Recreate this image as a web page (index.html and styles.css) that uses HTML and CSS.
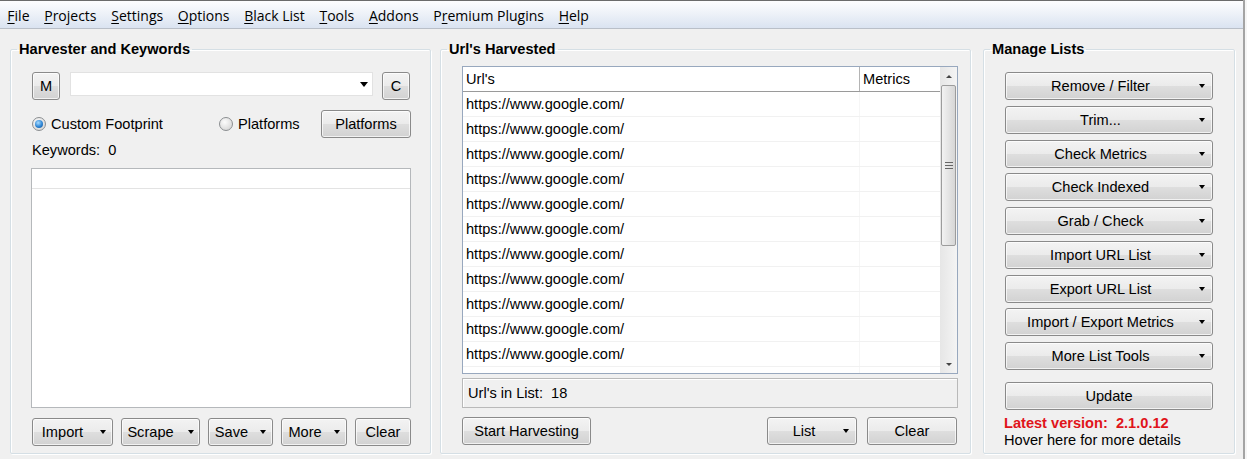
FILE: index.html
```html
<!DOCTYPE html>
<html lang="en">
<head>
    <meta charset="UTF-8">
    <title>Scrapebox</title>
    <link rel="stylesheet" href="styles.css">
</head>
<body>
    <div class="window">
        <ul class="menubar">
            <li><u>F</u>ile</li>
            <li><u>P</u>rojects</li>
            <li><u>S</u>ettings</li>
            <li><u>O</u>ptions</li>
            <li><u>B</u>lack List</li>
            <li><u>T</u>ools</li>
            <li><u>A</u>ddons</li>
            <li>P<u>r</u>emium Plugins</li>
            <li><u>H</u>elp</li>
        </ul>

        <div class="panes">
            <!-- left: footprint + keywords -->
            <fieldset class="pane pane-harvester">
                <legend>Harvester and Keywords</legend>
                <div class="pane-body">
                    <div class="footprint-row">
                        <button class="btn btn-square">M</button>
                        <div class="combo"><span class="caret"></span></div>
                        <button class="btn btn-square">C</button>
                    </div>
                    <div class="mode-row">
                        <label class="radio radio-first"><span class="radio-dot checked"></span>Custom Footprint</label>
                        <label class="radio"><span class="radio-dot"></span>Platforms</label>
                        <button class="btn btn-platforms">Platforms</button>
                    </div>
                    <div class="keyword-count">Keywords:&nbsp; 0</div>
                    <div class="keyword-box">
                        <div class="keyword-head"></div>
                    </div>
                    <div class="button-row">
                        <button class="btn btn-menu w-import">Import <span class="caret"></span></button>
                        <button class="btn btn-menu w-scrape">Scrape <span class="caret"></span></button>
                        <button class="btn btn-menu w-save">Save <span class="caret"></span></button>
                        <button class="btn btn-menu w-more">More <span class="caret"></span></button>
                        <button class="btn w-clear">Clear</button>
                    </div>
                </div>
            </fieldset>

            <!-- middle: harvested urls -->
            <fieldset class="pane pane-urls">
                <legend>Url's Harvested</legend>
                <div class="pane-body">
                    <div class="url-table">
                        <div class="url-list">
                            <div class="url-head">
                                <div class="col-url">Url's</div>
                                <div class="col-metrics">Metrics</div>
                            </div>
                            <div class="url-rows" id="rows"></div>
                        </div>
                        <div class="scrollbar">
                            <div class="sb-arrow"><span class="tri-up"></span></div>
                            <div class="sb-thumb"><span class="grip"></span></div>
                            <div class="sb-track"></div>
                            <div class="sb-arrow"><span class="tri-down"></span></div>
                        </div>
                    </div>
                    <div class="url-status">Url's in List:&nbsp;&nbsp;18</div>
                    <div class="harvest-row">
                        <button class="btn w-start">Start Harvesting</button>
                        <button class="btn btn-menu w-list">List <span class="caret"></span></button>
                        <button class="btn w-clear-list">Clear</button>
                    </div>
                </div>
            </fieldset>

            <!-- right: list tools -->
            <fieldset class="pane pane-manage">
                <legend>Manage Lists</legend>
                <div class="pane-body">
                    <div class="tool-list">
                        <button class="btn btn-tool"><span class="label">Remove / Filter</span><span class="caret"></span></button>
                        <button class="btn btn-tool"><span class="label">Trim...</span><span class="caret"></span></button>
                        <button class="btn btn-tool"><span class="label">Check Metrics</span><span class="caret"></span></button>
                        <button class="btn btn-tool"><span class="label">Check Indexed</span><span class="caret"></span></button>
                        <button class="btn btn-tool"><span class="label">Grab / Check</span><span class="caret"></span></button>
                        <button class="btn btn-tool"><span class="label">Import URL List</span><span class="caret"></span></button>
                        <button class="btn btn-tool"><span class="label">Export URL List</span><span class="caret"></span></button>
                        <button class="btn btn-tool"><span class="label">Import / Export Metrics</span><span class="caret"></span></button>
                        <button class="btn btn-tool"><span class="label">More List Tools</span><span class="caret"></span></button>
                    </div>
                    <button class="btn btn-update">Update</button>
                    <div class="version">Latest version:&nbsp; 2.1.0.12</div>
                    <div class="version-hint">Hover here for more details</div>
                </div>
            </fieldset>
        </div>
    </div>

    <script>
        const rows = document.getElementById('rows');
        for (let i = 0; i < 12; i++) {
            const row = document.createElement('div');
            row.className = 'url-row';
            row.innerHTML = '<div class="col-url">https://www.google.com/</div><div class="col-metrics"></div>';
            rows.appendChild(row);
        }
    </script>
</body>
</html>
```

FILE: styles.css
```css
* {
    box-sizing: border-box;
}

body {
    margin: 0;
    background: #f6f6f6;
    font-family: "Liberation Sans", Arial, sans-serif;
    font-size: 14.6px;
    color: #000;
    overflow: hidden;
}

.window {
    width: 1245px;
    height: 459px;
    background: #f0f0f0;
    border-right: 2px solid #a4a4a4;
}

/* menu bar */
.menubar {
    display: flex;
    margin: 0;
    padding: 0;
    list-style: none;
    height: 29px;
    border-top: 1px solid #6b6b6b;
    border-bottom: 1px solid #b9bfc8;
    background: linear-gradient(#fdfdfe, #eef2f8 45%, #dae3f1);
    font-family: "Open Sans", "Noto Sans", sans-serif;
    font-size: 14px;
    line-height: 29px;
}

.menubar li {
    padding: 0 7.35px;
}

.menubar u {
    text-decoration-thickness: 1px;
    text-underline-offset: 2px;
}

/* panes */
.panes {
    display: flex;
    padding: 11px 0 0 10px;
}

.pane {
    margin: 0;
    padding: 0;
    height: 414px;
    border: 1px solid #d5dfe5;
    box-shadow: inset 1px 1px 0 #fff, 1px 1px 0 #fff;
    border-radius: 2px;
}

.pane legend {
    margin-left: 6px;
    padding: 0 2px;
    font-weight: bold;
    line-height: 18px;
}

.pane-harvester {
    width: 421px;
}

.pane-urls {
    width: 531px;
    margin-left: 9px;
}

.pane-manage {
    width: 252px;
    margin-left: 12px;
}

.pane-body {
    padding: 14px 19px 0 21px;
}

.pane-urls .pane-body {
    padding: 8px 11px 0 21px;
}

/* buttons */
.btn {
    height: 28px;
    padding: 0;
    font: inherit;
    color: #000;
    border: 1px solid #8a8a8a;
    border-radius: 3px;
    background: linear-gradient(#f3f3f3, #ebebeb 50%, #dedede 51%, #d2d2d2);
    box-shadow: inset 0 0 0 1px rgba(255, 255, 255, 0.7);
}

.caret {
    display: inline-block;
    width: 0;
    height: 0;
    border-left: 3.5px solid transparent;
    border-right: 3.5px solid transparent;
    border-top: 4px solid #000;
    vertical-align: middle;
}

.btn-menu {
    display: flex;
    align-items: center;
    justify-content: center;
    gap: 14px;
}

.btn-square {
    width: 28px;
}

/* left pane */
.footprint-row {
    display: flex;
    align-items: flex-start;
}

.combo {
    position: relative;
    width: 303px;
    height: 24px;
    margin: 0 9px 0 10px;
    background: #fff;
    border: 1px solid #e2e2e2;
}

.combo .caret {
    position: absolute;
    right: 4px;
    top: 9px;
    border-left-width: 4px;
    border-right-width: 4px;
    border-top-width: 5px;
}

.mode-row {
    display: flex;
    align-items: center;
    margin-top: 10px;
}

.radio {
    display: flex;
    align-items: center;
}

.radio-first {
    width: 187px;
}

.radio-dot {
    width: 14px;
    height: 14px;
    margin-right: 5px;
    border-radius: 50%;
    border: 1px solid #8b8e91;
    background: radial-gradient(circle at 40% 35%, #fcfcfc, #dcdcdc 70%, #cfcfcf);
    position: relative;
}

.radio-dot.checked::after {
    content: "";
    position: absolute;
    left: 2px;
    top: 2px;
    width: 8px;
    height: 8px;
    border-radius: 50%;
    background: radial-gradient(circle at 40% 35%, #a9dcff, #2e86d6 55%, #144b85);
}

.btn-platforms {
    width: 90px;
    margin-left: auto;
}

.keyword-count {
    margin-top: 3px;
    line-height: 18px;
}

.keyword-box {
    margin-top: 9px;
    margin-left: -1px;
    width: 380px;
    height: 240px;
    background: #fff;
    border: 1px solid #b5b8bb;
}

.keyword-head {
    height: 20px;
    border-bottom: 1px solid #e3e3e3;
}

.button-row {
    display: flex;
    gap: 8px;
    margin-top: 10px;
}

.w-import { width: 81px; gap: 17px; padding-left: 3px; }
.w-scrape { width: 79px; }
.w-save { width: 65px; gap: 12px; }
.w-more { width: 66px; gap: 12px; }
.w-clear { width: 56px; }

/* middle pane */
.url-table {
    display: flex;
    width: 496px;
    height: 308px;
    border: 1px solid #98a8be;
    background: #fff;
}

.url-list {
    flex: 1;
    overflow: hidden;
}

.url-head {
    display: flex;
    height: 25px;
    border-bottom: 1px solid #9a9a9a;
    line-height: 25px;
}

.url-head .col-url {
    border-right: 1px solid #b4b4b4;
}

.col-url {
    width: 397px;
    padding-left: 3px;
}

.col-metrics {
    flex: 1;
    padding-left: 3px;
}

.url-row {
    display: flex;
    height: 25px;
    line-height: 25px;
    border-bottom: 1px solid #f1f1f1;
}

.url-row .col-url {
    border-right: 1px solid #f6f6f6;
}

.scrollbar {
    width: 17px;
    display: flex;
    flex-direction: column;
    background: linear-gradient(to right, #e6e6e6, #f4f4f4);
}

.sb-arrow {
    height: 18px;
    display: flex;
    align-items: center;
    justify-content: center;
}

.tri-up, .tri-down {
    width: 0;
    height: 0;
    border-left: 3px solid transparent;
    border-right: 3px solid transparent;
}

.tri-up {
    border-bottom: 3px solid #444;
}

.tri-down {
    border-top: 3px solid #444;
}

.sb-thumb {
    height: 161px;
    margin: 0 1px;
    border: 1px solid #9c9c9c;
    border-radius: 2px;
    background: linear-gradient(to right, #f2f2f2, #e4e4e4 50%, #d6d6d6);
    display: flex;
    align-items: center;
    justify-content: center;
}

.grip {
    width: 8px;
    height: 7px;
    border-top: 1px solid #666;
    border-bottom: 1px solid #666;
    position: relative;
}

.grip::after {
    content: "";
    position: absolute;
    left: 0;
    right: 0;
    top: 2px;
    border-top: 1px solid #666;
}

.sb-track {
    flex: 1;
}

.url-status {
    margin-top: 4px;
    width: 496px;
    height: 30px;
    padding-left: 5px;
    line-height: 29px;
    border: 1px solid #b9b9b9;
    box-shadow: inset 1px 1px 0 #fff;
}

.harvest-row {
    display: flex;
    margin-top: 9px;
    width: 495px;
}

.w-start { width: 129px; }
.w-list { width: 90px; margin-left: auto; gap: 28px; padding-left: 18px; }
.w-clear-list { width: 90px; margin-left: 10px; }

/* right pane */
.tool-list {
    display: flex;
    flex-direction: column;
    gap: 5.75px;
}

.btn-tool {
    display: flex;
    align-items: center;
    width: 208px;
}

.btn-tool .label {
    flex: 1;
    text-align: center;
}

.btn-tool .caret {
    margin: 0 7px 0 4px;
}

.btn-update {
    display: block;
    width: 208px;
    margin-top: 12px;
}

.version {
    margin-top: 5px;
    margin-left: -1px;
    color: #e0141b;
    font-weight: bold;
    line-height: 17px;
}

.version-hint {
    margin-left: -1px;
    line-height: 17px;
}
```
